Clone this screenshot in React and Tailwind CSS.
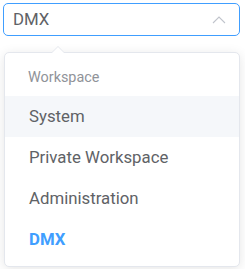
import React from "react";

export default function App() {
  const items = ["System", "Private Workspace", "Administration"];
  return (
    <div className="w-[245px] h-[269px] bg-white overflow-hidden" style={{ fontFamily: "Roboto, 'Noto Sans', sans-serif" }}>
      <div className="pt-[3px] pl-[3px]">
        <div className="w-[237px] h-[33px] border border-[#409EFF] rounded-[5px] flex items-center pl-[9px] pr-[13px] justify-between">
          <span className="text-[16.8px] text-[#606266]">DMX</span>
          <svg width="14" height="9" viewBox="0 0 14 9" fill="none">
            <path d="M1 8 L7 2 L13 8" stroke="#C0C4CC" strokeWidth="1.1" />
          </svg>
        </div>
      </div>
      <div className="relative mt-[16px] ml-[4px] w-[236px] bg-white border border-[#E4E7ED] rounded-[5px] shadow-[0_2px_12px_0_rgba(0,0,0,0.1)] pt-[7px] pb-[6px]">
        <div className="absolute -top-[7px] left-[46px] w-0 h-0 border-l-[7px] border-r-[7px] border-b-[7px] border-l-transparent border-r-transparent border-b-[#E4E7ED]" />
        <div className="absolute -top-[6px] left-[47px] w-0 h-0 border-l-[6px] border-r-[6px] border-b-[6px] border-l-transparent border-r-transparent border-b-white" />
        <div className="h-[36px] leading-[36px] pl-[23px] text-[14.4px] text-[#909399]">Workspace</div>
        {items.map((t, i) => (
          <div key={t} className={`h-[41px] leading-[41px] pl-[24px] text-[16.8px] text-[#606266] ${i === 0 ? "bg-[#F5F7FA]" : ""}`}>{t}</div>
        ))}
        <div className="h-[41px] leading-[41px] pl-[24px] text-[16.8px] text-[#409EFF] font-bold">DMX</div>
      </div>
    </div>
  );
}
